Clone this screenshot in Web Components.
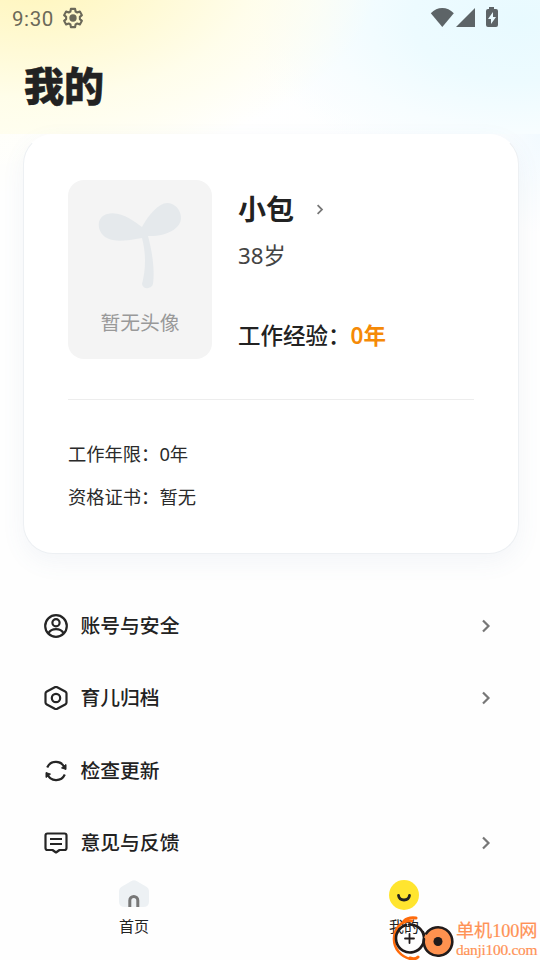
<!DOCTYPE html>
<html lang="zh-CN">
<head>
<meta charset="utf-8">
<meta name="viewport" content="width=device-width">
<title>我的</title>
<style>
html,body{margin:0;height:100%}
body{font-family:"Noto Sans","Noto Sans CJK SC",sans-serif;color:#222}
</style>
</head>
<body>
<profile-page></profile-page>
<script>
function define(name, markup) {
  const t = document.createElement('template');
  t.innerHTML = markup;
  customElements.define(name, class extends HTMLElement {
    constructor() {
      super();
      this.attachShadow({ mode: 'open' }).appendChild(t.content.cloneNode(true));
    }
  });
}

define('status-bar', `
<style>
:host{display:flex;align-items:center;height:36px;padding:1px 42px 0 12px;box-sizing:border-box;font:400 20.5px/36px Roboto,sans-serif;color:#6c6959;letter-spacing:.6px}
svg{display:block;margin-bottom:2px}
.gear{margin-left:8px}
.right{display:flex;margin-left:auto}
</style>
<span>9:30</span>
<svg class="gear" width="22" height="22" viewBox="0 0 24 24" fill="none" stroke="#6c6959" stroke-width="2.300" stroke-linejoin="round"><path d="M9.7 2h4.6l.5 2.9 1.9 1.1 2.8-1 2.2 3.9-2.2 1.9v2.4l2.2 1.9-2.2 3.9-2.8-1-1.9 1.1-.5 2.9H9.7l-.5-2.9L7.300 18l-2.800 1-2.200-3.900 2.200-1.900v-2.400L2.300 8.900 4.500 5l2.800 1 1.900-1.100z"/><circle cx="12" cy="12" r="4" fill="#6c6959" stroke="none"/></svg>
<svg class="right" width="68" height="22" viewBox="0 0 68 22" fill="#5d6467"><path d="M.8 6.300C7.300-.7 17.300-.7 23.800 6.300L12.300 20z"/><path d="M45 1v19H26z"/><path fill-rule="evenodd" d="M59 0h5v2h2q2 0 2 2v14q0 2-2 2h-8q-2 0-2-2V4q0-2 2-2h1zM63 5l-5 7h3v5l5-7h-3z"/></svg>
`);

define('sprout-avatar', `
<style>
:host{display:flex;flex-direction:column;align-items:center;width:144px;height:179px;box-sizing:border-box;padding-top:22px;border-radius:16px;background:#f4f4f4;color:#999;font-size:19.800px;line-height:28px}
svg{display:block;margin-bottom:19px}
</style>
<svg width="84" height="88" viewBox="0 0 84 88" fill="#e5e9ec"><path d="M44 25C51 12 61 1 69 1c8 0 14 7 14 15 0 11-16 19-33 18 4 15 7 33 5 48-1 5-10 6-11 0 4-15 4-31 0-46C28 39 16 40 9 36-2 30-2 15 9 12c13-4 27 7 35 13z"/></svg>
<slot></slot>
`);

define('chevron-right', `
<style>:host{display:block;width:var(--w,10px)}svg{display:block;width:100%;height:auto}</style>
<svg viewBox="0 0 10 14" fill="none" stroke="#777" stroke-width="2.200"><path d="M2 1.500 7.500 7 2 12.500"/></svg>
`);

define('profile-card', `
<style>
:host{display:block;box-sizing:border-box;width:496px;height:420px;margin:0 0 0 23px;padding:45px 44px 0;border:1px solid #edf0f3;border-top-color:#fff;border-radius:30px;background:#fff;box-shadow:0 8px 24px rgba(90,125,165,.065)}
.top{display:flex;gap:26px;height:219px;border-bottom:1px solid #ededed}
.info{display:flex;flex-direction:column;padding-top:9px}
.name{display:flex;align-items:center;gap:22px;font-size:28px;font-weight:700;line-height:40px}
chevron-right{--w:8px;margin-top:1px}
.age{font-size:22.300px;line-height:32px;margin-top:11px;color:#444}
.exp{font-size:22.500px;line-height:32px;margin-top:48px;font-weight:500;white-space:nowrap}
.exp b{font-weight:600;color:#f58a07}
.facts{display:grid;gap:16px;padding-top:40px;font-size:18.300px;line-height:27px;color:#2a2a2a}
</style>
<div class="top">
  <sprout-avatar>暂无头像</sprout-avatar>
  <div class="info">
    <div class="name">小包<chevron-right></chevron-right></div>
    <div class="age">38岁</div>
    <div class="exp">工作经验：<b>0年</b></div>
  </div>
</div>
<div class="facts"><div>工作年限：0年</div><div>资格证书：暂无</div></div>
`);

define('menu-row', `
<style>
:host{display:flex;align-items:center;height:72.500px;padding:0 49px 0 44px;font-size:19.800px;font-weight:500;line-height:30px}
::slotted(svg){display:block;width:24px;height:24px;margin-right:12.500px;fill:none;stroke:#252525;stroke-width:2.200;stroke-linejoin:round}
chevron-right{margin-left:auto}
:host([plain]) chevron-right{display:none}
</style>
<slot name="icon"></slot><slot></slot><chevron-right></chevron-right>
`);

define('tab-item', `
<style>
:host{display:flex;flex-direction:column;align-items:center;font-size:15px;line-height:22px;color:#222}
::slotted(svg){display:block;width:30px;height:30px;margin-bottom:5px}
</style>
<slot name="icon"></slot><slot></slot>
`);

define('site-mark', `
<style>
:host{display:flex;align-items:center;color:#ff9255;font-family:"Liberation Serif","Noto Sans CJK SC",serif;white-space:nowrap}
svg{display:block;margin-right:-1px}
.t{font-size:18.200px;line-height:22px;-webkit-text-stroke:.2px;letter-spacing:-.1px}
.d{font-size:15.400px;line-height:16px;letter-spacing:-.25px;-webkit-text-stroke:.2px}
</style>
<svg width="65" height="46" viewBox="0 0 65 46" fill="none" stroke-linecap="round">
<path d="M20 5C9 4 2 13 2 23c0 10 7 18 17 20" stroke="#ff6b0b" stroke-width="2.600"/>
<path d="M12 5q4-4 12-3M18 42q5 2 8-1" stroke="#ff6b0b" stroke-width="3"/>
<circle cx="18" cy="22.500" r="14" stroke="#211b1b" stroke-width="2.600" stroke-dasharray="76 3 10 0" transform="rotate(-60 18 22.500)"/>
<path d="M13 22.500h9M17.500 18v9" stroke="#211b1b" stroke-width="1.800"/>
<path d="M31 16l2 5M35 19l4-4" stroke="#211b1b" stroke-width="2.400"/>
<circle cx="46" cy="25.500" r="14.300" fill="#ff924f" stroke="#211b1b" stroke-width="2.600" stroke-dasharray="72 6 14 0" transform="rotate(-100 46 25.500)"/>
<circle cx="46" cy="25.500" r="4.500" fill="#211b1b"/></svg>
<div><div class="t">单机100网</div><div class="d">danji100.com</div></div>
`);

define('profile-page', `
<style>
:host{display:flex;flex-direction:column;position:relative;width:540px;height:960px;overflow:hidden;background:
 radial-gradient(ellipse 60px 100px at 540px 134px,#f2faff,rgba(255,255,255,0)),
 radial-gradient(ellipse 80px 60px at 0 134px,#fffffa,rgba(255,255,255,0)),#fefefe}
header{height:134px;background:
 radial-gradient(ellipse 350px 190px at 30px -25px,#fff5ba 0%,#fff8cb 25%,rgba(255,253,232,.85) 65%,rgba(255,255,255,0) 100%),
 radial-gradient(ellipse 270px 155px at 520px 20px,#e8faff 0%,#edfbff 40%,#f7fdff 72%,rgba(255,255,255,0) 100%),
 linear-gradient(90deg,#fffff3,#fff 45%,#fafdff)}
h1{margin:20px 0 0 24px;font-size:40px;font-weight:900;line-height:60px;color:#222;-webkit-text-stroke:.5px}
.menu{margin-top:35.700px;height:290px}
nav{display:grid;grid-template-columns:1fr 1fr;margin-top:auto;height:80.500px;padding:0 1px 0 0;margin-left:-1px}
site-mark{position:absolute;left:392px;top:916px}
</style>
<header><status-bar></status-bar><h1>我的</h1></header>
<profile-card></profile-card>
<div class="menu">
<menu-row><svg slot="icon" viewBox="0 0 24 24"><circle cx="12" cy="12" r="10.800"/><circle cx="12" cy="8.800" r="3.600"/><path d="M4.500 19c3-5.300 12-5.300 15 0"/></svg>账号与安全</menu-row>
<menu-row><svg slot="icon" viewBox="0 0 24 24"><path d="M10.800 1.200q1.200-.6 2.400 0l8 4.300q1.300.7 1.300 2v9q0 1.300-1.300 2l-8 4.300q-1.200.6-2.400 0l-8-4.300q-1.300-.7-1.300-2v-9q0-1.300 1.300-2z"/><circle cx="12" cy="12" r="4.200"/></svg>育儿归档</menu-row>
<menu-row plain><svg slot="icon" viewBox="0 0 24 24"><path d="M3.200 8.500A9.500 9.500 0 0 1 20.700 9M20.800 15.500A9.500 9.500 0 0 1 3.300 15"/><path d="M22 5.500v5l-4.500-1.600zM2 18.500v-5l4.500 1.600z" fill="#252525" stroke-width="1"/></svg>检查更新</menu-row>
<menu-row><svg slot="icon" viewBox="0 0 24 24"><path d="M3.500 2.500h17q2 0 2 2V17q0 2-2 2h-5L12 21.500 8.500 19h-5q-2 0-2-2V4.500q0-2 2-2zM6 8h12M6 13h12"/></svg>意见与反馈</menu-row>
</div>
<nav>
<tab-item><svg slot="icon" viewBox="0 0 30 30"><path d="M12.500 1q2.500-1.400 5 0L27 6.500q3 1.600 3 5v10q0 5.500-6 5.500H6q-6 0-6-5.500v-10q0-3.400 3-5z" fill="#edf1f4"/><path d="M10.800 27v-6.500a4 4 0 0 1 8 0V27" fill="none" stroke="#777" stroke-width="3"/></svg>首页</tab-item>
<tab-item><svg slot="icon" viewBox="0 0 30 30"><circle cx="15" cy="15" r="15" fill="#ffe52f"/><path d="M9.500 15.500c1 6 10 6 11 0" fill="none" stroke="#222" stroke-width="2.800" stroke-linecap="round"/></svg>我的</tab-item>
</nav>
<site-mark></site-mark>
`);
</script>
</body>
</html>
